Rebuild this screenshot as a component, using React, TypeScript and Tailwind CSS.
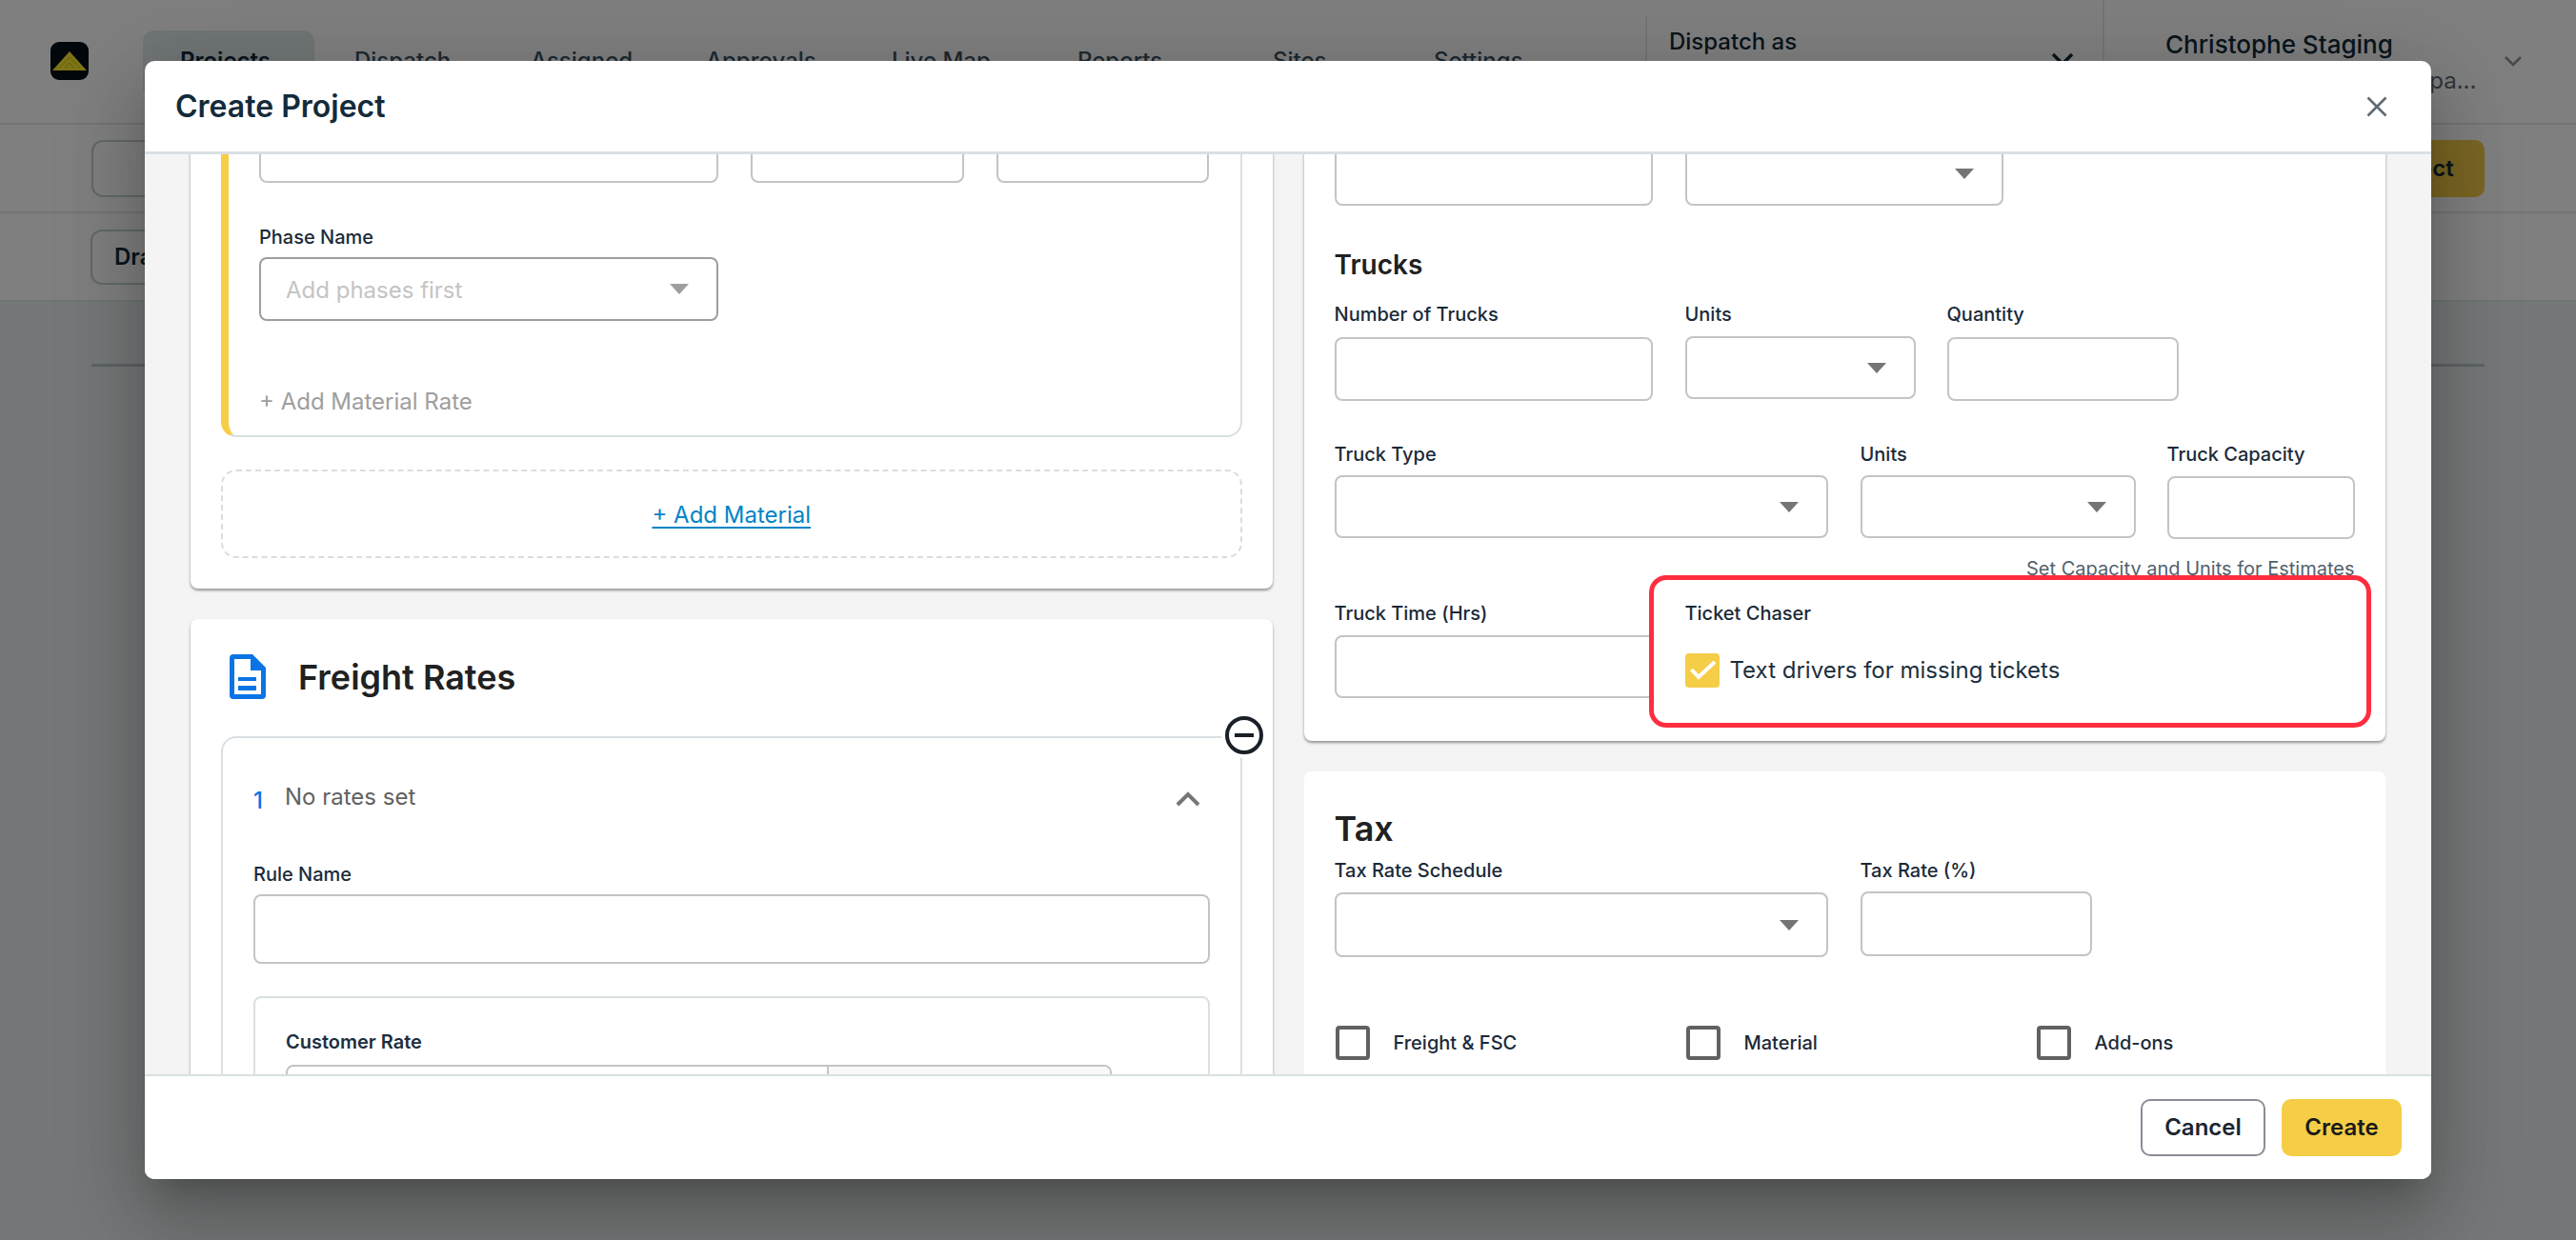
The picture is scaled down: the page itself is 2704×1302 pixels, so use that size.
import React from "react";

function Arrow({ muted }: { muted?: boolean }) {
  return (
    <svg width="20" height="11" viewBox="0 0 20 11" className="shrink-0">
      <path d="M0 0H20L10 11Z" fill={muted ? "#9e9e9e" : "#757575"} />
    </svg>
  );
}

function Label({ children }: { children: React.ReactNode }) {
  return <div className="h-6 text-[20px] leading-6 font-medium text-[#1b2a38] whitespace-nowrap">{children}</div>;
}

function Page() {
  const tabs = [
    { t: "Dispatch", c: "w-[185px]" },
    { t: "Assigned", c: "w-[184px]" },
    { t: "Approvals", c: "w-[195px]" },
    { t: "Live Map", c: "w-[195px]" },
    { t: "Reports", c: "w-[205px]" },
    { t: "Sites", c: "w-[169px]" },
    { t: "Settings", c: "w-[120px]" },
  ];
  return (
    <div className="h-screen overflow-hidden bg-[#eaf0f0] text-[#132b3a]">
      <div className="bg-white">
        <div className="flex h-[131px] border-b-2 border-[#e4eaea]">
          <div className="ml-[53px] mt-[44px] mr-[57px] flex h-10 w-10 items-center justify-center rounded-[9px] bg-[#020e16]">
            <svg width="36" height="20" viewBox="0 0 36 20">
              <path d="M18 0L36 20H0Z" fill="#ffe92e" />
              <path d="M18 6L29 18M18 6L7 18M18 12L23 18M18 12L13 18" stroke="#d4c320" strokeWidth="1" fill="none" />
            </svg>
          </div>
          <div className="mt-[32px] flex h-[64px]">
            <div className="mr-[42px] flex w-[180px] items-center rounded-t-[12px] bg-[#e0eaea] pl-[39px] text-[24px] font-semibold">Projects</div>
            {tabs.map(({ t, c }) => (
              <div key={t} className={`flex items-center text-[24px] font-medium text-[#3b5262] ${c}`}>{t}</div>
            ))}
          </div>
          <div className="ml-auto mt-[16px] flex h-[113px] w-[480px] justify-between border-l-2 border-[#e4eaea] pl-[23px] pr-[30px]">
            <div className="mt-[10px] text-[24px] font-medium">Dispatch as</div>
            <svg width="24" height="14" viewBox="0 0 24 14" className="mt-[39px]">
              <path d="M2 2L12 12L22 2" stroke="#132b3a" strokeWidth="3.5" fill="none" />
            </svg>
          </div>
          <div className="flex w-[497px] border-l-2 border-[#e4eaea] pl-[64px]">
            <div className="w-[334px] pt-[30px]">
              <div className="text-[26px] font-medium leading-[34px] whitespace-nowrap">Christophe Staging</div>
              <div className="mt-[4px] text-[24px] leading-[34px] text-[#5f6b73] whitespace-nowrap">Christophe Staging Compa...</div>
            </div>
            <svg width="20" height="12" viewBox="0 0 20 12" className="ml-[21px] mt-[58px]">
              <path d="M2 2L10 10L18 2" stroke="#8a949b" strokeWidth="2.5" fill="none" />
            </svg>
          </div>
        </div>
        <div className="flex h-[93px] items-center justify-between border-b-2 border-[#e4eaea] px-[96px]">
          <div className="h-[60px] w-[500px] rounded-[12px] border-2 border-[#c4d0d6]" />
          <div className="flex h-[60px] w-[230px] items-center justify-center rounded-[10px] bg-[#f5cd47] text-[24px] font-semibold">Create Project</div>
        </div>
        <div className="flex h-[93px] items-center border-b-2 border-[#e4eaea] px-[95px]">
          <div className="flex h-[58px] items-center rounded-[12px] border-2 border-[#c4d0d6] px-[23px] text-[24px] font-semibold">Draft</div>
        </div>
      </div>
      <div className="mx-[96px] mt-[65px] h-[3px] bg-[#bcc6c8]" />
    </div>
  );
}

function Field({ className }: { className: string }) {
  return <div className={`rounded-[8px] border-2 border-[#c4c4c4] bg-white ${className}`} />;
}

function Select({ className }: { className: string }) {
  return (
    <div className={`flex items-center justify-end rounded-[8px] border-2 border-[#c4c4c4] bg-white pr-[29px] ${className}`}>
      <Arrow />
    </div>
  );
}

function Check({ label }: { label: string }) {
  return (
    <div className="flex w-[368px] shrink-0 items-center gap-[25px]">
      <div className="h-[36px] w-[36px] rounded-[4px] border-[4px] border-[#616161] bg-white" />
      <div className="text-[20px] font-medium text-[#1b2a38]">{label}</div>
    </div>
  );
}

function LeftColumn() {
  return (
    <div className="-mt-[39px] flex flex-col gap-[32px]">
      <div className="rounded-[8px] bg-white px-[32px] pb-[32px] shadow-[0_2px_3px_rgba(0,0,0,0.4)]">
        <div className="rounded-[16px] border-2 border-l-[8px] border-[#d9e0e3] border-l-[#f5cd47] pl-[32px] pb-[19px]">
          <div className="flex gap-[34px]">
            <Field className="h-[67px] w-[482px]" />
            <Field className="h-[67px] w-[224px]" />
            <Field className="h-[67px] w-[223px]" />
          </div>
          <div className="mt-[45px] mb-[9px]"><Label>Phase Name</Label></div>
          <div className="flex h-[67px] w-[482px] items-center justify-between rounded-[8px] border-2 border-[#9e9e9e] pl-[26px] pr-[29px]">
            <span className="pt-[2px] text-[24px] text-[#c4c4c4]">Add phases first</span>
            <Arrow muted />
          </div>
          <div className="mt-[69px] text-[24px] leading-[32px] text-[#9e9e9e]">+ Add Material Rate</div>
        </div>
        <div className="mt-[34px] flex h-[93px] items-center justify-center rounded-[16px] border-2 border-dashed border-[#d9dde0]">
          <span className="pt-[2px] text-[24px] text-[#0284c7] underline underline-offset-4">+ Add Material</span>
        </div>
      </div>
      <div className="rounded-[8px] bg-white px-[32px] pt-[37px] pb-[40px] shadow-[0_2px_3px_rgba(0,0,0,0.4)]">
        <div className="flex items-center gap-[34px] pl-[9px]">
          <svg width="38" height="47" viewBox="0 0 38 47">
            <path d="M4 0H24L38 14V43a4 4 0 0 1-4 4H4a4 4 0 0 1-4-4V4a4 4 0 0 1 4-4Z" fill="#0b74e5" />
            <path d="M5 5H22V17H33V42H5Z" fill="#fff" />
            <path d="M9 24H28V28H9ZM9 33H28V38H9Z" fill="#0b74e5" />
          </svg>
          <div className="text-[36px] leading-[44px] font-semibold text-[#212121]">Freight Rates</div>
        </div>
        <div className="relative mt-[39px] rounded-[16px] border-2 border-[#d9e0e3] px-[32px] pt-[46px] pb-[32px]">
          <div className="absolute -top-[23px] -right-[24px] h-10 w-10 rounded-full bg-white ring-[4px] ring-white">
            <div className="flex h-10 w-10 items-center justify-center rounded-full border-[4px] border-[#1a2028]">
              <div className="h-[4px] w-[20px] bg-[#1a2028]" />
            </div>
          </div>
          <div className="flex h-[32px] items-center">
            <span className="mt-[8px] w-[33px] text-[24px] font-medium text-[#0b74e5]">1</span>
            <span className="text-[24px] text-[#616161]">No rates set</span>
            <svg width="26" height="16" viewBox="0 0 26 16" className="ml-auto mr-[10px] mt-[3px]">
              <path d="M2 14L13 3L24 14" stroke="#757575" strokeWidth="4" fill="none" />
            </svg>
          </div>
          <div className="mt-[53px] mb-[9px]"><Label>Rule Name</Label></div>
          <Field className="h-[73px] w-full" />
          <div className="mt-[34px] rounded-[8px] border-2 border-[#d9e0e3] px-[32px] pt-[34px] pb-[32px]">
            <div className="mb-[12px] h-6 text-[20px] leading-6 font-semibold text-[#1b2f3e]">Customer Rate</div>
            <div className="flex h-[80px] w-[867px] overflow-hidden rounded-[8px] border-2 border-[#c4c4c4]">
              <div className="w-[568px] border-r-2 border-[#c4c4c4]" />
              <div className="flex-1 bg-[#f9f9f9]" />
            </div>
          </div>
        </div>
      </div>
    </div>
  );
}

function RightColumn() {
  return (
    <div className="-mt-[13px] flex flex-col gap-[32px]">
      <div className="relative rounded-[8px] bg-white px-[32px] pb-[45px] shadow-[0_2px_3px_rgba(0,0,0,0.4)]">
        <div className="flex gap-[34px]">
          <Field className="h-[67px] w-[334px]" />
          <Select className="h-[67px] w-[334px]" />
        </div>
        <div className="mt-[44px] h-[36px] text-[28px] leading-[36px] font-semibold text-[#212121]">Trucks</div>
        <div className="mt-[22px] flex gap-[34px]">
          <div className="w-[334px]">
            <div className="mb-[12px]"><Label>Number of Trucks</Label></div>
            <Field className="h-[67px] w-full" />
          </div>
          <div className="w-[242px]">
            <div className="mb-[11px]"><Label>Units</Label></div>
            <Select className="h-[66px] w-full" />
          </div>
          <div className="-ml-px w-[243px]">
            <div className="mb-[12px]"><Label>Quantity</Label></div>
            <Field className="h-[67px] w-full" />
          </div>
        </div>
        <div className="mt-[44px] flex gap-[34px]">
          <div className="w-[518px]">
            <div className="mb-[10px]"><Label>Truck Type</Label></div>
            <Select className="h-[66px] w-full" />
          </div>
          <div className="w-[289px]">
            <div className="mb-[10px]"><Label>Units</Label></div>
            <Select className="h-[66px] w-full" />
          </div>
          <div className="-ml-px w-[197px]">
            <div className="mb-[11px]"><Label>Truck Capacity</Label></div>
            <Field className="h-[66px] w-full" />
          </div>
        </div>
        <div className="mt-[19px] h-6 w-[1071px] text-right text-[20px] leading-6 text-[#52616b]">Set Capacity and Units for Estimates</div>
        <div className="mt-[23px] w-[500px]">
          <div className="mb-[11px]"><Label>Truck Time (Hrs)</Label></div>
          <Field className="h-[66px] w-full" />
        </div>
        <div className="absolute bottom-[14px] left-[362px] right-[15px] h-[160px] rounded-[18px] border-[5px] border-[#ff2d3f] bg-white pl-[33px] pt-[23px]">
          <Label>Ticket Chaser</Label>
          <div className="mt-[30px] flex items-center gap-[11px]">
            <div className="h-[36px] w-[36px] rounded-[4px] bg-[#f5cd47]">
              <svg width="36" height="36" viewBox="0 0 36 36">
                <path d="M6.5 17L14 25L31 9" stroke="#fff" strokeWidth="4" fill="none" />
              </svg>
            </div>
            <div className="text-[24px] text-[#1b2f3e]">Text drivers for missing tickets</div>
          </div>
        </div>
      </div>
      <div className="rounded-[8px] bg-white px-[32px] pt-[38px] pb-[60px]">
        <div className="h-[44px] text-[36px] leading-[44px] font-semibold text-[#212121]">Tax</div>
        <div className="mt-[10px] flex gap-[34px]">
          <div className="w-[518px]">
            <div className="mb-[11px]"><Label>Tax Rate Schedule</Label></div>
            <Select className="h-[68px] w-full" />
          </div>
          <div className="w-[243px]">
            <div className="mb-[10px]"><Label>Tax Rate (%)</Label></div>
            <Field className="h-[68px] w-full" />
          </div>
        </div>
        <div className="mt-[72px] flex pl-px">
          <Check label="Freight & FSC" />
          <Check label="Material" />
          <Check label="Add-ons" />
        </div>
      </div>
    </div>
  );
}

function Modal() {
  return (
    <div className="absolute inset-0 bg-black/50 pl-[152px] pt-[64px]">
      <div className="flex h-[1174px] w-[2400px] flex-col overflow-hidden rounded-[10px] bg-white shadow-[0_22px_30px_-14px_rgba(0,0,0,0.2),0_48px_76px_6px_rgba(0,0,0,0.14),0_18px_92px_16px_rgba(0,0,0,0.12)]">
        <div className="flex h-[98px] shrink-0 items-center justify-between border-b-[3px] border-[#d9e0e3] pl-[32px] pr-[46px]">
          <div className="text-[32px] font-semibold text-[#132b3a]">Create Project</div>
          <svg width="22" height="22" viewBox="0 0 22 22">
            <path d="M1.5 1.5L20.5 20.5M20.5 1.5L1.5 20.5" stroke="#5f6b73" strokeWidth="2.6" />
          </svg>
        </div>
        <div className="grid min-h-0 flex-1 grid-cols-2 gap-[33px] overflow-hidden bg-[#f4f4f4] px-[48px]">
          <LeftColumn />
          <RightColumn />
        </div>
        <div className="flex h-[110px] shrink-0 items-start justify-end gap-[17px] border-t-2 border-[#d9e0e0] bg-white pr-[31px] pt-[24px]">
          <div className="flex h-[60px] w-[131px] items-center justify-center rounded-[10px] border-2 border-[#8a8d96] text-[24px] font-semibold text-[#1b2433]">Cancel</div>
          <div className="flex h-[60px] w-[126px] items-center justify-center rounded-[10px] bg-[#f5cd47] text-[24px] font-semibold text-[#1a1a1a]">Create</div>
        </div>
      </div>
    </div>
  );
}

export default function App() {
  return (
    <div className="relative h-screen overflow-hidden font-['Inter',sans-serif]">
      <Page />
      <Modal />
    </div>
  );
}
